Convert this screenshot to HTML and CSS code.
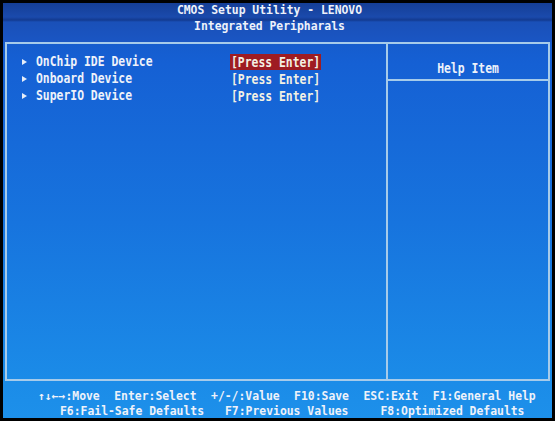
FILE: index.html
```html
<!DOCTYPE html>
<html>
<head>
<meta charset="utf-8">
<link rel="stylesheet" href="styles.css">
</head>
<body>
<div class="screen">
  <header class="head">
    <div class="title"><span class="tall-s">CMOS Setup Utility - LENOVO</span></div>
    <div class="subtitle"><span class="tall-s">Integrated Peripharals</span></div>
  </header>
  <main class="frame">
    <section class="menu">
      <div class="row"><span class="arrow"></span><span class="name"><span class="tall">OnChip IDE Device</span></span><span class="val sel"><span class="tall">[Press Enter]</span></span></div>
      <div class="row"><span class="arrow"></span><span class="name"><span class="tall">Onboard Device</span></span><span class="val"><span class="tall">[Press Enter]</span></span></div>
      <div class="row"><span class="arrow"></span><span class="name"><span class="tall">SuperIO Device</span></span><span class="val"><span class="tall">[Press Enter]</span></span></div>
    </section>
    <aside class="help">
      <div class="help-head"><span class="tall">Help Item</span></div>
      <div class="help-body"></div>
    </aside>
  </main>
  <footer class="foot">
    <div class="keys k1"><span>↑↓←→:Move</span><span>Enter:Select</span><span>+/-/:Value</span><span>F10:Save</span><span>ESC:Exit</span><span>F1:General Help</span></div>
    <div class="keys k2"><span>F6:Fail-Safe Defaults</span><span class="g2">F7:Previous Values</span><span class="g3">F8:Optimized Defaults</span></div>
  </footer>
</div>
</body>
</html>
```

FILE: styles.css
```css
html, body {
  margin: 0;
  padding: 0;
  background: #000;
  width: 555px;
  height: 421px;
  overflow: hidden;
}
.screen {
  margin: 3px 3px 3px 3px;
  height: 415px;
  display: flex;
  flex-direction: column;
  background: linear-gradient(180deg, #1654c0 0px, #1560d4 60px, #1774de 220px, #1b8ce8 380px, #1d90ea 415px);
  font-family: "DejaVu Sans Mono", "Liberation Mono", monospace;
  font-weight: bold;
  color: #eef2fa;
  font-size: 11.4px;
}
.tall {
  display: inline-block;
  transform: scaleY(1.25);
}
.tall-s {
  display: inline-block;
  transform: scaleY(1.12);
}
.head {
  height: 39px;
  flex: none;
  background: linear-gradient(180deg, #153e96 0px, #1a4aac 14px, #133a90 17px, #1a50b8 19px, #1a56c4 39px);
  text-align: center;
  padding-right: 16px;
  box-sizing: border-box;
}
.title {
  line-height: 14px;
}
.subtitle {
  line-height: 19px;
}
.frame {
  flex: none;
  height: 339px;
  box-sizing: border-box;
  margin: 0 2px 0 2px;
  border: 2px solid #a6cbea;
  display: grid;
  grid-template-columns: 379px 1fr;
}
.menu {
  padding-top: 9px;
}
.row {
  display: flex;
  align-items: center;
  height: 17px;
  padding-left: 15px;
}
.arrow {
  width: 0;
  height: 0;
  border-left: 5px solid #e6edf8;
  border-top: 3px solid transparent;
  border-bottom: 3px solid transparent;
  margin-right: 9px;
}
.name {
  width: 194px;
  line-height: 17px;
}
.val {
  line-height: 16px;
  height: 16px;
  padding: 0 1px;
  color: #f3f1e4;
}
.sel {
  background: #9e1c22;
}
.help {
  border-left: 2px solid #a6cbea;
  display: flex;
  flex-direction: column;
}
.help-head {
  height: 37px;
  box-sizing: border-box;
  border-bottom: 2px solid #a6cbea;
  text-align: center;
  padding-top: 16px;
  line-height: 16px;
}
.foot {
  flex: 1;
  padding-top: 8px;
  box-sizing: border-box;
}
.keys {
  display: flex;
  line-height: 15px;
  white-space: pre;
}
.k1 {
  padding-left: 35px;
  column-gap: 14.5px;
}
.k2 {
  padding-left: 57px;
}
.g2 {
  margin-left: 21px;
}
.g3 {
  margin-left: 32px;
}
```
